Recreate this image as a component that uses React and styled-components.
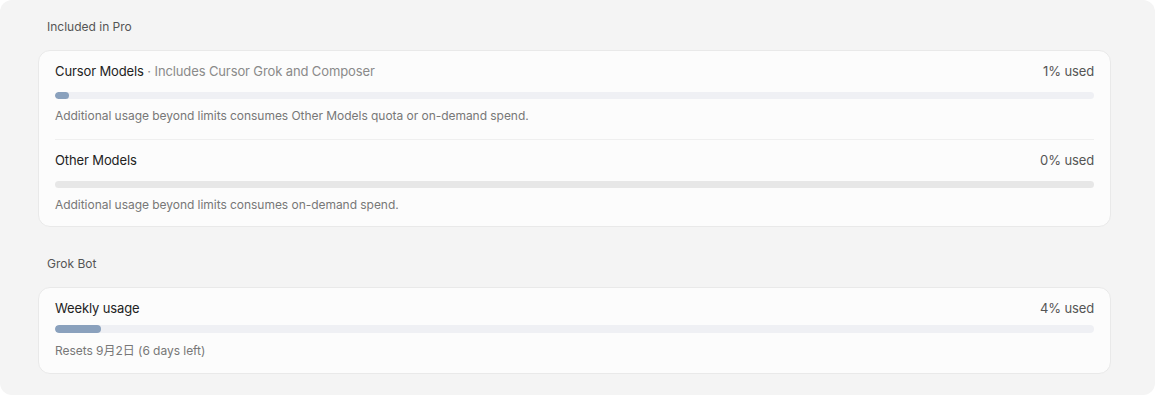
import React from 'react'
import styled, { createGlobalStyle } from 'styled-components'

const GlobalStyle = createGlobalStyle`
  html, body {
    margin: 0;
    padding: 0;
    background: #ffffff;
  }
  body {
    font-family: Inter, "Noto Sans CJK SC", "Noto Sans", sans-serif;
    -webkit-font-smoothing: antialiased;
  }
`

const Panel = styled.div`
  box-sizing: border-box;
  width: 1155px;
  height: 395px;
  padding: 19px 44px 22px 38px;
  background: #f4f4f4;
  border-radius: 12px;
`

const Section = styled.section`
  & + & {
    margin-top: 29px;
  }
`

const SectionLabel = styled.div`
  padding-left: 9px;
  margin-bottom: 15px;
  font-size: 12px;
  line-height: 16px;
  color: #555555;
`

const Card = styled.div`
  background: #fcfcfc;
  border: 1px solid #e9e9e9;
  border-radius: 12px;
  padding: 0 16px;
`

const Row = styled.div`
  padding: ${p => (p.$tight ? '10px 0 14px' : '10px 0 15px')};

  & + & {
    border-top: 1px solid #efefef;
    padding: 10px 0 13px;
  }
`

const Head = styled.div`
  display: flex;
  justify-content: space-between;
  align-items: center;
  height: 20px;
  font-size: 13px;
  letter-spacing: -0.12px;
`

const Title = styled.span`
  color: #222222;
`

const Note = styled.span`
  color: #8a8a8a;
`

const Used = styled.span`
  color: #555555;
`

const Track = styled.div`
  height: ${p => (p.$tight ? '8px' : '7px')};
  margin-top: ${p => (p.$tight ? '7px' : '11px')};
  border-radius: 4px;
  background: ${p => (p.$empty ? '#e7e7e7' : '#eff0f4')};
  overflow: hidden;
`

const Fill = styled.div`
  height: 100%;
  border-radius: 4px;
  background: #8aa1bd;
`

const Desc = styled.div`
  margin-top: ${p => (p.$tight ? '10px' : '9px')};
  font-size: 12px;
  line-height: 16px;
  letter-spacing: -0.04px;
  color: #777777;
`

const UsageRow = ({ title, note, used, fill, desc, tight }) => (
  <Row $tight={tight}>
    <Head>
      <span>
        <Title>{title}</Title>
        {note && <Note> · {note}</Note>}
      </span>
      <Used>{used}% used</Used>
    </Head>
    <Track $tight={tight} $empty={used === 0}>
      {fill > 0 && <Fill style={{ width: `${fill}%` }} />}
    </Track>
    <Desc $tight={tight}>{desc}</Desc>
  </Row>
)

const App = () => (
  <>
    <GlobalStyle />
    <Panel>
      <Section>
        <SectionLabel>Included in Pro</SectionLabel>
        <Card>
          <UsageRow
            title="Cursor Models"
            note="Includes Cursor Grok and Composer"
            used={1}
            fill={1.35}
            desc="Additional usage beyond limits consumes Other Models quota or on-demand spend."
          />
          <UsageRow
            title="Other Models"
            used={0}
            fill={0}
            desc="Additional usage beyond limits consumes on-demand spend."
          />
        </Card>
      </Section>
      <Section>
        <SectionLabel>Grok Bot</SectionLabel>
        <Card>
          <UsageRow
            tight
            title="Weekly usage"
            used={4}
            fill={4.4}
            desc="Resets 9月2日 (6 days left)"
          />
        </Card>
      </Section>
    </Panel>
  </>
)

export default App
